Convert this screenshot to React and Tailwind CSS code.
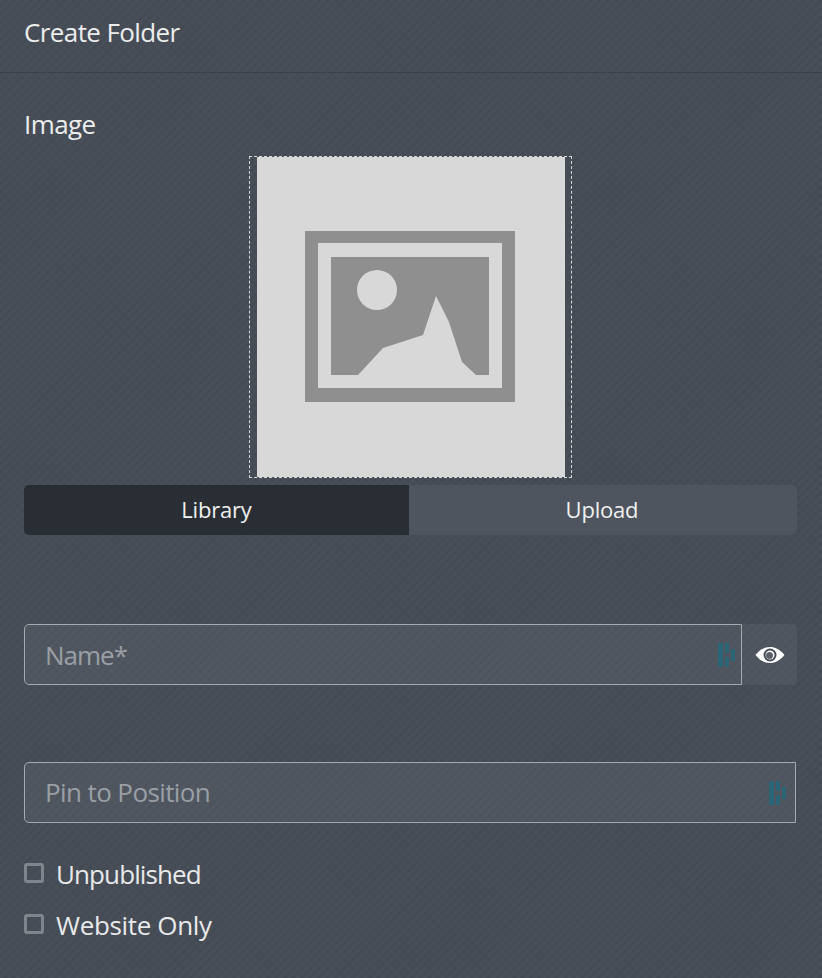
const DashlaneIcon = ({ className }) => (
  <svg className={className} width="18" height="24" viewBox="0 0 18 24" fill="#2a6676">
    <rect x="0" y="0" width="5" height="24" />
    <rect x="7" y="0" width="4" height="10" />
    <rect x="7" y="14" width="4" height="10" />
    <rect x="13" y="6" width="4" height="12" />
  </svg>
);

const PlaceholderImage = () => (
  <svg width="308" height="320" viewBox="0 0 308 320" className="block">
    <rect width="308" height="320" fill="#d8d8d8" />
    <rect x="48" y="74" width="210" height="171" fill="#8f8f8f" />
    <rect x="61" y="86" width="184" height="145" fill="#d8d8d8" />
    <rect x="74" y="100" width="158" height="118" fill="#8f8f8f" />
    <circle cx="120" cy="133" r="20" fill="#d8d8d8" />
    <polygon points="101,218 126,191 166,178 179,139 192,165 205,205 219,218" fill="#d8d8d8" />
  </svg>
);

const EyeIcon = () => (
  <svg width="30" height="18" viewBox="0 0 30 18">
    <path d="M0.5 9C5 3.5 10 1 15 1s10 2.5 14.5 8C25 14.5 20 17 15 17S5 14.5 0.5 9z" fill="#ffffff" />
    <circle cx="15" cy="9" r="6.5" fill="#464d57" />
    <circle cx="15" cy="9" r="4.5" fill="#ffffff" />
    <circle cx="14.5" cy="9.5" r="3.5" fill="#5b616a" />
  </svg>
);

const Field = ({ placeholder, textClass, iconClass }) => (
  <div className="flex-1 h-[61px] flex items-center justify-between pl-5 border border-[#a5aab0] rounded-l-[5px] bg-white/5">
    <span className={`text-[26px] text-[#9a9fa6] ${textClass}`}>{placeholder}</span>
    <DashlaneIcon className={iconClass} />
  </div>
);

const Checkbox = ({ label, trackingClass }) => (
  <label className="flex items-center gap-3 h-[34px]">
    <span className="w-5 h-5 border-[3px] border-[#7f858c] rounded-[3px] -mt-[2px]" />
    <span className={`text-[26px] text-[#e8e9ea] ${trackingClass}`}>{label}</span>
  </label>
);

export default function App() {
  return (
    <div className="w-[822px] h-[978px] overflow-hidden text-[#eceded] font-['Open_Sans',sans-serif] bg-[#454c56] bg-[repeating-linear-gradient(135deg,rgba(255,255,255,0.01)_0px,rgba(255,255,255,0.01)_3px,rgba(0,0,0,0.01)_3px,rgba(0,0,0,0.01)_6px),repeating-linear-gradient(45deg,rgba(255,255,255,0.008)_0px,rgba(255,255,255,0.008)_3px,rgba(0,0,0,0.008)_3px,rgba(0,0,0,0.008)_6px)]">
      <header className="h-[73px] flex items-center px-6 pb-2 border-b border-[#3c424b]">
        <h1 className="text-[26px] tracking-[-0.6px]">Create Folder</h1>
      </header>

      <div className="pl-6 pr-[25px]">
        <div className="mt-[33px] h-[36px] flex items-center text-[26px] tracking-[-0.6px]">Image</div>

        <div className="mt-[14px] ml-[225px] w-[323px] h-[322px] border border-dashed border-[#d5d7d9] flex justify-center items-center">
          <PlaceholderImage />
        </div>

        <div className="mt-[7px] flex h-[50px] text-[22px] tracking-[-0.2px] rounded-[5px] overflow-hidden">
          <button className="w-[385px] pb-[2px] bg-[#292e35] text-[#f0f0f0]">Library</button>
          <button className="flex-1 pb-[2px] pr-[2px] bg-[#4e555f] text-[#f0f0f0]">Upload</button>
        </div>

        <div className="mt-[89px] flex">
          <Field placeholder="Name*" textClass="tracking-[-1px] mt-[2px]" iconClass="mr-[5px]" />
          <button className="w-[55px] h-[61px] flex items-center justify-center rounded-r-[5px] bg-white/5">
            <EyeIcon />
          </button>
        </div>

        <div className="mt-[77px] flex w-[772px]">
          <Field placeholder="Pin to Position" textClass="tracking-[-0.6px]" iconClass="mr-[8px]" />
        </div>

        <div className="mt-[34px] flex flex-col gap-[17px]">
          <Checkbox label="Unpublished" trackingClass="tracking-[-0.9px]" />
          <Checkbox label="Website Only" trackingClass="tracking-[-0.35px]" />
        </div>
      </div>
    </div>
  );
}
